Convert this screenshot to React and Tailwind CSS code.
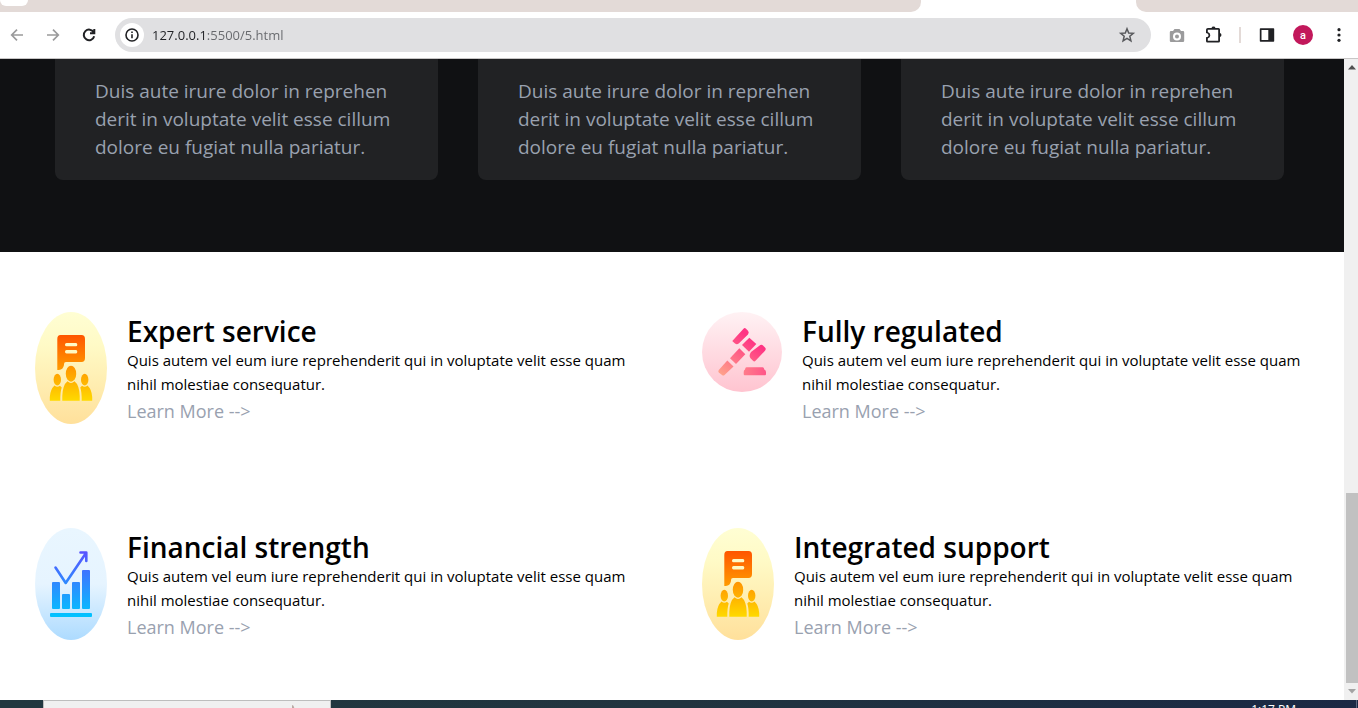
import React from "react";

function ServiceIcon({ id }) {
  return (
    <svg width="72" height="112" viewBox="0 0 72 112" className="shrink-0" aria-hidden="true">
      <defs>
        <linearGradient id={`${id}-bg`} x1="0" y1="0" x2="0" y2="1">
          <stop offset="0" stopColor="#fffed3" />
          <stop offset="0.3" stopColor="#fffac6" />
          <stop offset="1" stopColor="#ffe09b" />
        </linearGradient>
        <linearGradient id={`${id}-fg`} gradientUnits="userSpaceOnUse" x1="0" y1="23" x2="0" y2="89">
          <stop offset="0" stopColor="#ff5500" />
          <stop offset="1" stopColor="#ffda00" />
        </linearGradient>
      </defs>
      <ellipse cx="36" cy="56" rx="36" ry="56" fill={`url(#${id}-bg)`} />
      <g fill={`url(#${id}-fg)`}>
        <path
          fillRule="evenodd"
          d="M25.500 23H46.500Q50 23 50 27V46Q50 50 46.500 50H31Q29 50 29 52V53Q28 57.800 24 58H22.300V27Q22.300 23 25.500 23ZM31.500 31Q30 31 30 32.700Q30 34.300 31.500 34.300H41Q42.300 34.300 42.300 32.700Q42.300 31 41 31ZM31.500 38Q30 38 30 39.700Q30 41.500 31.500 41.500H41Q42.300 41.500 42.300 39.700Q42.300 38 41 38Z"
        />
        <ellipse cx="36" cy="61.700" rx="5.200" ry="8" />
        <ellipse cx="22.300" cy="67.700" rx="3.700" ry="5.900" />
        <ellipse cx="49.700" cy="67.700" rx="3.700" ry="5.900" />
        <path d="M27.300 88.700V84Q27.700 73 32.500 69.300Q36 72.500 39.500 69.300Q44.300 73 44.700 84V88.700Z" />
        <path d="M14.800 88.700V85Q15.200 77.500 19.500 73.500Q22.300 76 25 73.800L26.700 75.500Q25.200 80 25.300 88.700Z" />
        <path d="M57.200 88.700V85Q56.800 77.500 52.500 73.500Q49.700 76 47 73.800L45.300 75.500Q46.800 80 46.700 88.700Z" />
      </g>
    </svg>
  );
}

function GavelIcon({ id }) {
  return (
    <svg width="80" height="80" viewBox="0 0 80 80" className="shrink-0" aria-hidden="true">
      <defs>
        <linearGradient id={`${id}-bg`} x1="0" y1="0" x2="0" y2="1">
          <stop offset="0" stopColor="#fff2f4" />
          <stop offset="1" stopColor="#ffc4d0" />
        </linearGradient>
        <linearGradient id={`${id}-fg`} gradientUnits="userSpaceOnUse" x1="47" y1="25" x2="18" y2="63">
          <stop offset="0" stopColor="#ff3383" />
          <stop offset="1" stopColor="#ffa48b" />
        </linearGradient>
        <linearGradient id={`${id}-base`} x1="0" y1="0" x2="1" y2="0">
          <stop offset="0" stopColor="#ff7c8a" />
          <stop offset="1" stopColor="#ff5588" />
        </linearGradient>
      </defs>
      <circle cx="40" cy="40" r="40" fill={`url(#${id}-bg)`} />
      <g fill={`url(#${id}-fg)`}>
        <path d="M30.500 28.700L41.500 16.800Q42.700 15.500 44 16.700L46 18.700Q47.500 20.500 46 22.500L37 31.300Q35 33 33 31.500L31 29.700Q30.200 29.200 30.500 28.700Z" />
        <path d="M47.300 25.700L54.300 32L47 39.700L40 33Z" />
        <path d="M49 40L57 34Q59.500 32 61 33.500L63 35.500Q64.500 37 63 38.800L53.500 48.800Q52.300 50 51 48.800L48.500 46.300Q46.500 43.500 49 40Z" />
        <path d="M37.300 36.300L43.300 42.300L34 52L28 46.300Z" />
        <path d="M25.300 48.500L31.500 54.500L22.500 63Q21.300 64 20 63L16.800 60.500Q15.800 59.500 16.800 58Z" />
      </g>
      <path
        fill={`url(#${id}-base)`}
        d="M44.500 55.300H60.500Q62 55.300 62.300 57.500Q64 58 64 60V62Q64 63.300 63 63.300H42.700Q41.700 63.300 41.700 62V60Q41.700 58 43 57.500Q43.300 55.300 44.500 55.300Z"
      />
    </svg>
  );
}

function ChartIcon({ id }) {
  return (
    <svg width="72" height="112" viewBox="0 0 72 112" className="shrink-0" aria-hidden="true">
      <defs>
        <linearGradient id={`${id}-bg`} x1="0" y1="0" x2="0" y2="1">
          <stop offset="0" stopColor="#e9f6ff" />
          <stop offset="0.5" stopColor="#e6f4ff" />
          <stop offset="1" stopColor="#addbff" />
        </linearGradient>
        <linearGradient id={`${id}-fg`} gradientUnits="userSpaceOnUse" x1="0" y1="23" x2="0" y2="89">
          <stop offset="0" stopColor="#5a52ff" />
          <stop offset="1" stopColor="#00c4ff" />
        </linearGradient>
      </defs>
      <ellipse cx="36" cy="56" rx="36" ry="56" fill={`url(#${id}-bg)`} />
      <g fill={`url(#${id}-fg)`}>
        <rect x="17" y="54" width="8" height="27" rx="1" />
        <rect x="27" y="66" width="8" height="15" rx="1" />
        <rect x="37" y="54" width="8" height="27" rx="1" />
        <rect x="47" y="42" width="8" height="39" rx="1" />
        <rect x="15" y="85" width="42" height="4" rx="1" />
      </g>
      <path
        d="M20.500 39.500L30.700 55L51 25M45.500 24.500H51.300V33"
        fill="none"
        stroke={`url(#${id}-fg)`}
        strokeWidth="2.600"
        strokeLinecap="round"
        strokeLinejoin="round"
      />
    </svg>
  );
}

const quote = "Duis aute irure dolor in reprehen derit in voluptate velit esse cillum dolore eu fugiat nulla pariatur.";
const blurb = "Quis autem vel eum iure reprehenderit qui in voluptate velit esse quam nihil molestiae consequatur.";

const features = [
  { title: "Expert service", Icon: ServiceIcon },
  { title: "Fully regulated", Icon: GavelIcon },
  { title: "Financial strength", Icon: ChartIcon },
  { title: "Integrated support", Icon: ServiceIcon },
];

function Feature({ title, Icon, id }) {
  return (
    <article className="flex items-start gap-5">
      <Icon id={id} />
      <div>
        <h2 className="pt-0.5 text-[28px] leading-[34px] font-semibold">{title}</h2>
        <p className="text-[15px] leading-6">{blurb}</p>
        <a href="#more" className="block text-[18px] leading-[30px] text-gray-400">
          Learn More --&gt;
        </a>
      </div>
    </article>
  );
}

function TabStrip() {
  return (
    <div className="flex h-3 shrink-0 bg-white">
      <div className="flex-1 rounded-br-[10px] bg-[#e3dad7]">
        <div className="h-1.5 w-7 rounded-b-lg bg-white" />
      </div>
      <div className="w-[215px]" />
      <div className="w-[222px] rounded-bl-[10px] bg-[#e3dad7]" />
    </div>
  );
}

function Toolbar() {
  return (
    <div className="flex h-[47px] shrink-0 items-center border-b border-[#c8c6c6] bg-white text-[#202124]">
      <div className="flex w-[115px] items-center justify-between pr-[17px] pl-2">
        <button aria-label="Back" className="text-[#9a9a9b]">
          <svg width="18" height="18" viewBox="0 0 18 18" fill="none" stroke="currentColor" strokeWidth="1.700">
            <path d="M15 9H4M9 3.700L3.700 9L9 14.300" />
          </svg>
        </button>
        <button aria-label="Forward" className="text-[#9a9a9b]">
          <svg width="18" height="18" viewBox="0 0 18 18" fill="none" stroke="currentColor" strokeWidth="1.700">
            <path d="M3 9H14M9 3.700L14.300 9L9 14.300" />
          </svg>
        </button>
        <button aria-label="Reload">
          <svg width="18" height="18" viewBox="0 0 18 18" fill="none" stroke="currentColor" strokeWidth="2">
            <path d="M13.700 6.300A5.300 5.300 0 1 0 14.200 10.300M14.300 3V7.300H10" />
          </svg>
        </button>
      </div>
      <div className="flex h-[34px] flex-1 items-center rounded-full bg-[#e0e0e2] pr-[15px] pl-[5px]">
        <button aria-label="Site information" className="flex size-6 items-center justify-center rounded-full bg-white">
          <svg width="14" height="14" viewBox="0 0 14 14" fill="none" stroke="currentColor" strokeWidth="1.600">
            <circle cx="7" cy="7" r="6" />
            <path d="M7 6.200V10.300M7 3.600V5" />
          </svg>
        </button>
        <input
          aria-label="Address"
          defaultValue="127.0.0.1:5500/5.html"
          className="ml-2 min-w-0 flex-1 bg-[linear-gradient(90deg,#1f2024_55px,#66686c_55px)] bg-clip-text text-[13px] leading-5 text-transparent outline-none"
        />
        <button aria-label="Bookmark this page" className="text-[#58595c]">
          <svg width="18" height="18" viewBox="0 0 18 18" fill="none" stroke="currentColor" strokeWidth="1.500">
            <path d="M9 2.800L10.700 7L15.300 7.300L11.800 10.300L12.900 14.800L9 12.400L5.100 14.800L6.200 10.300L2.700 7.300L7.300 7Z" />
          </svg>
        </button>
      </div>
      <div className="flex w-[207px] items-center pl-[17px]">
        <button aria-label="Screenshot" className="text-[#9b9b9c]">
          <svg width="18" height="18" viewBox="0 0 18 18" fill="currentColor">
            <path
              fillRule="evenodd"
              d="M6.500 3H11.500L13 5H15Q16.200 5 16.200 6.200V14.800Q16.200 16 15 16H3Q1.800 16 1.800 14.800V6.200Q1.800 5 3 5H5ZM9 6.400A4 4 0 1 0 9 14.400A4 4 0 1 0 9 6.400ZM9 8.400A2 2 0 1 1 9 12.400A2 2 0 1 1 9 8.400Z"
            />
          </svg>
        </button>
        <button aria-label="Extensions" className="ml-[18px]">
          <svg width="20" height="20" viewBox="0 0 20 20" fill="currentColor">
            <path
              fillRule="evenodd"
              d="M4 3H7.500A2.100 2.100 0 0 1 11.500 3H14.500Q16 3 16 4.500V8A2.100 2.100 0 0 1 16 12V16Q16 17.500 14.500 17.500H3.500Q2 17.500 2 16V12.300Q4.600 12 4.600 10.200Q4.600 8.400 2 8V4.800Q2 3 4 3ZM3.800 4.800V7Q6.300 7.900 6.300 10.200Q6.300 12.500 3.800 13.500V15.700H14.200V4.800Z"
            />
          </svg>
        </button>
        <span className="ml-[15px] h-4 w-0.5 bg-[#e3dad7]" />
        <button aria-label="Side panel" className="ml-[17px]">
          <svg width="18" height="18" viewBox="0 0 18 18" fill="currentColor">
            <path fillRule="evenodd" d="M2.500 2.300H15.500Q16.200 2.300 16.200 3V15Q16.200 15.700 15.500 15.700H2.500Q1.800 15.700 1.800 15V3Q1.800 2.300 2.500 2.300ZM3.500 4V14H10.300V4Z" />
          </svg>
        </button>
        <button
          aria-label="Profile"
          className="ml-[17px] flex size-5 items-center justify-center rounded-full bg-[#c2185b] font-[Roboto,sans-serif] text-[11px] leading-none font-medium text-white"
        >
          a
        </button>
        <button aria-label="Browser menu" className="ml-[17px]">
          <svg width="18" height="18" viewBox="0 0 18 18" fill="currentColor">
            <circle cx="9" cy="3.700" r="1.600" />
            <circle cx="9" cy="9" r="1.600" />
            <circle cx="9" cy="14.300" r="1.600" />
          </svg>
        </button>
      </div>
    </div>
  );
}

function Scrollbar() {
  return (
    <div className="flex w-[14px] shrink-0 flex-col items-end bg-[#f0f0f0]" aria-hidden="true">
      <div className="flex h-[17px] w-full items-center justify-center pl-0.5">
        <svg width="8" height="5" viewBox="0 0 8 5" className="fill-[#505050]">
          <path d="M4 0L8 4.500H0Z" />
        </svg>
      </div>
      <div className="mt-auto h-[190px] w-3 bg-[#c1c1c1]" />
      <div className="flex h-[17px] w-full items-center justify-center pl-0.5">
        <svg width="8" height="5" viewBox="0 0 8 5" className="fill-[#a3a3a3]">
          <path d="M4 4.500L8 0H0Z" />
        </svg>
      </div>
    </div>
  );
}

function Taskbar() {
  return (
    <div className="flex h-2 shrink-0 items-start overflow-hidden bg-linear-to-r from-[#223840] via-[#21343f] to-[#1b2844] pl-[43px]">
      <div className="flex h-10 w-72 justify-end border border-[#bdbdbd] bg-[#f0f0f0] pr-8">
        <input aria-label="Search" className="min-w-0 flex-1 outline-none" />
        <svg width="10" height="8" viewBox="0 0 10 8" aria-hidden="true">
          <path d="M4 8V4Q6 4 6.500 8Z" fill="#b9a9a4" />
        </svg>
      </div>
      <time className="mt-0.5 mr-[60px] ml-auto text-[12px] leading-4 text-white">1:17 PM</time>
      <span className="mr-px h-10 w-px bg-[#5d6880]" />
    </div>
  );
}

export default function App() {
  return (
    <div className="flex h-screen flex-col overflow-hidden bg-white font-['Open_Sans','Noto_Sans',sans-serif] text-black">
      <TabStrip />
      <Toolbar />
      <div className="flex min-h-0 flex-1">
        <main className="min-w-0 flex-1 overflow-hidden">
          <section className="grid grid-cols-3 gap-10 bg-[#101113] pr-[60px] pb-[72px] pl-[55px]">
            {[0, 1, 2].map((n) => (
              <div key={n} className="rounded-b-lg bg-[#212224] px-10 pt-[18px] pb-[19px]">
                <p className="text-[19px] leading-7 text-gray-400">{quote}</p>
              </div>
            ))}
          </section>
          <section className="grid grid-cols-2 gap-x-[60px] gap-y-[102px] px-[35px] pt-[60px] pb-[58px]">
            {features.map((f, i) => (
              <Feature key={f.title} {...f} id={`feature-${i}`} />
            ))}
          </section>
        </main>
        <Scrollbar />
      </div>
      <Taskbar />
    </div>
  );
}
